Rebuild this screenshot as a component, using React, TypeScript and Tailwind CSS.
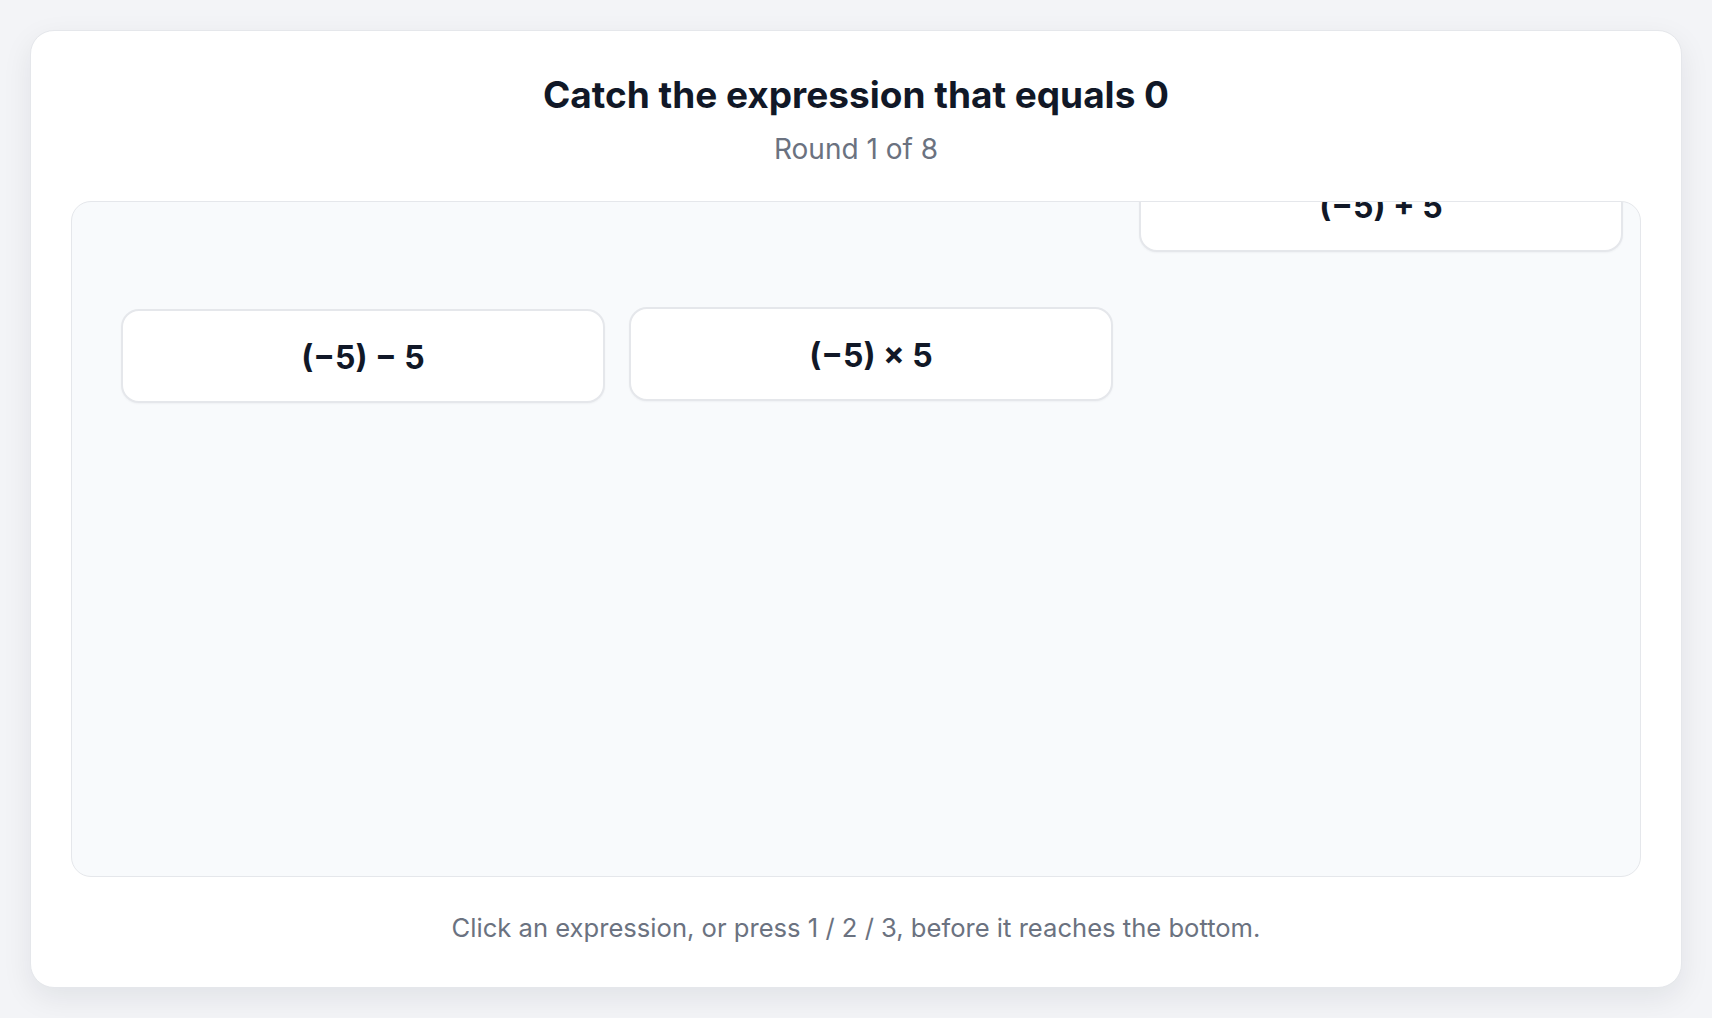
import React from 'react';

type Drop = { id: number; label: string; left: number; top: number };

const drops: Drop[] = [
  { id: 1, label: '(−5) − 5', left: 49, top: 107 },
  { id: 2, label: '(−5) × 5', left: 557, top: 105 },
  { id: 3, label: '(−5) + 5', left: 1067, top: -44 },
];

const ExpressionCard = ({ drop }: { drop: Drop }) => (
  <button
    type="button"
    className="absolute flex h-[94px] w-[484px] items-center justify-center rounded-[18px] border-2 border-[#e5e7eb] bg-white pt-[4px] text-[32px] font-bold text-[#111827] shadow-[0_1px_2px_rgba(17,24,39,0.04)]"
    style={{ left: drop.left, top: drop.top }}
  >
    {drop.label}
  </button>
);

export default function App() {
  return (
    <div
      className="min-h-screen bg-[#f3f4f7] p-[30px]"
      style={{ fontFamily: 'Inter, "Noto Sans", "Liberation Sans", sans-serif' }}
    >
      <div className="flex h-[958px] flex-col rounded-[24px] border border-[#e5e7eb] bg-white px-10 pt-[42px] shadow-[0_10px_30px_rgba(15,23,42,0.08)]">
        <h1 className="text-center text-[37px] font-bold leading-[44px] text-[#111827]">
          Catch the expression that equals 0
        </h1>
        <p className="mt-4 text-center text-[28px] leading-[32px] text-[#6b7280]">Round 1 of 8</p>

        <div className="relative mt-[36px] h-[676px] overflow-hidden rounded-[20px] border border-[#e5e7eb] bg-[#f8fafc]">
          {drops.map((d) => (
            <ExpressionCard key={d.id} drop={d} />
          ))}
        </div>

        <p className="mt-[35px] text-center text-[25.6px] leading-[32px] text-[#6b7280]">
          Click an expression, or press 1 / 2 / 3, before it reaches the bottom.
        </p>
      </div>
    </div>
  );
}
